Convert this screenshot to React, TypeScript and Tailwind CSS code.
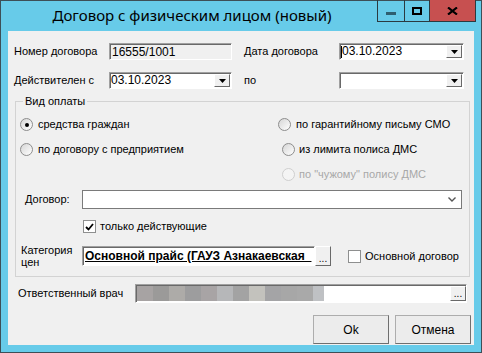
import React from "react";

const sunken =
  "border border-t-[#a0a0a0] border-l-[#a0a0a0] border-b-white border-r-white shadow-[inset_1px_1px_0_#696969]";

function DropBtn() {
  return (
    <div className="w-[16px] h-[13px] bg-[#f0f0f0] border border-t-white border-l-white border-b-[#696969] border-r-[#696969] flex items-center justify-center">
      <svg width="7" height="4" viewBox="0 0 7 4">
        <path d="M0 0H7L3.5 4Z" fill="#000" />
      </svg>
    </div>
  );
}

function DateCombo({ value, caret, w }: { value: string; caret?: boolean; w: string }) {
  return (
    <div className={`h-[17px] ${w} bg-white ${sunken} flex items-center justify-between pl-[1px] pr-[1px]`}>
      <div className="flex items-center text-[12px] leading-[13px] text-black">
        {caret && <span className="w-px h-[12px] bg-black" />}
        <span>{value}</span>
      </div>
      <DropBtn />
    </div>
  );
}

function Radio({ checked, disabled }: { checked?: boolean; disabled?: boolean }) {
  return (
    <span
      className={
        disabled
          ? "w-[13px] h-[13px] rounded-full border border-[#cfcfcf] bg-[#f4f4f4] flex items-center justify-center shrink-0"
          : "w-[13px] h-[13px] rounded-full border border-[#8d8d8d] bg-gradient-to-br from-[#d6d6d6] to-white flex items-center justify-center shrink-0"
      }
    >
      {checked && <span className="w-[4px] h-[4px] rounded-full bg-black" />}
    </span>
  );
}

function Check({ checked }: { checked?: boolean }) {
  return (
    <span className="w-[13px] h-[13px] bg-white border border-[#8e8f8f] flex items-center justify-center shrink-0">
      {checked && (
        <svg width="9" height="8" viewBox="0 0 9 8">
          <path d="M1 4L3.5 6.5L8 1" stroke="#000" strokeWidth="1.8" fill="none" />
        </svg>
      )}
    </span>
  );
}

function DotsBtn({ w }: { w: string }) {
  return (
    <div
      className={`${w} h-full bg-[#f0f0f0] border border-t-white border-l-white border-b-[#696969] border-r-[#696969] flex items-end justify-center pb-[2px] text-[10px] leading-[8px] text-black`}
    >
      ...
    </div>
  );
}

const mosaic = [
  "bg-[#a7a3a3]",
  "bg-[#9b9a99]",
  "bg-[#adaba8]",
  "bg-[#9d9d9e]",
  "bg-[#a8a4a5]",
  "bg-[#b6b7b9]",
  "bg-[#a3a3a3]",
  "bg-[#c3c2bd]",
  "bg-[#a4a4a6]",
  "bg-[#a7a7a7]",
  "bg-[#a9a9a9]",
  "bg-[#bfc1c4]",
];

export default function App() {
  return (
    <div className="w-[482px] h-[353px] bg-[#67cbe9] border border-[#3d4f57] flex flex-col">
      {/* title bar */}
      <div className="h-[30px] flex shrink-0">
        <div className="flex-1 flex items-center justify-center pl-[6px] pb-[1px] text-[15px] text-black font-['Noto_Sans',sans-serif]">
          Договор с физическим лицом (новый)
        </div>
        <div className="flex -mt-px mr-[5px] h-[22px] border-x border-b border-[#2b3a40]">
          <div className="w-[27px] border-r border-[#2b3a40] flex items-start justify-center pt-[12px]">
            <span className="w-[10px] h-[3px] bg-[#2e5f70]" />
          </div>
          <div className="w-[25px] border-r border-[#2b3a40] flex items-start justify-center pt-[7px]">
            <span className="w-[10px] h-[8px] border-2 border-black" />
          </div>
          <div className="w-[45px] bg-[#c75050] flex items-start justify-center pt-[7px]">
            <svg width="11" height="8" viewBox="0 0 11 8">
              <path d="M1 0.5L10 7.5M10 0.5L1 7.5" stroke="#000" strokeWidth="2.2" />
            </svg>
          </div>
        </div>
      </div>

      {/* client */}
      <div className="mx-[7px] h-[314px] bg-[#f0f0f0] flex flex-col font-['Liberation_Sans',Arial,sans-serif] text-[11px] text-black">
        {/* row 1 */}
        <div className="flex items-center mt-[12px] h-[17px] pl-[6px]">
          <div className="w-[95px]">Номер договора</div>
          <div className={`w-[123px] h-[17px] bg-[#f0f0f0] ${sunken} flex items-center pl-[2px] text-[12px]`}>
            16555/1001
          </div>
          <div className="w-[12px]" />
          <div className="w-[95px]">Дата договора</div>
          <DateCombo value="03.10.2023" caret w="w-[125px]" />
        </div>
        {/* row 2 */}
        <div className="flex items-center mt-[12px] h-[17px] pl-[6px]">
          <div className="w-[95px]">Действителен с</div>
          <DateCombo value="03.10.2023" w="w-[123px]" />
          <div className="w-[12px]" />
          <div className="w-[95px]">по</div>
          <DateCombo value="" w="w-[125px]" />
        </div>

        {/* group */}
        <fieldset className="mt-[6px] ml-[7px] w-[455px] border border-[#d3d3d3] pb-[10px] flex flex-col">
          <legend className="ml-[7px] px-[2px] leading-[13px]">Вид оплаты</legend>
          <div className="flex pt-[4px]">
            <div className="w-[262px] pl-[4px] flex flex-col">
              <div className="h-[25px] flex items-center gap-[5px]">
                <Radio checked />
                <span>средства граждан</span>
              </div>
              <div className="h-[25px] flex items-center gap-[5px]">
                <Radio />
                <span>по договору с предприятием</span>
              </div>
              <div className="h-[25px]" />
            </div>
            <div className="flex flex-col">
              <div className="h-[25px] flex items-center gap-[5px]">
                <Radio />
                <span>по гарантийному письму СМО</span>
              </div>
              <div className="h-[25px] flex items-center gap-[4px] pl-[4px]">
                <Radio />
                <span>из лимита полиса ДМС</span>
              </div>
              <div className="h-[25px] flex items-center gap-[4px] pl-[4px] text-[#a8a8a8]">
                <Radio disabled />
                <span>по "чужому" полису ДМС</span>
              </div>
            </div>
          </div>

          <div className="mt-[3px] h-[19px] flex items-center pl-[9px]">
            <div className="w-[57px]">Договор:</div>
            <div className="w-[380px] h-[19px] bg-white border border-[#7a7a7a] flex items-center justify-end pr-[5px]">
              <svg width="8" height="5" viewBox="0 0 8 5">
                <path d="M0.5 0.5L4 4L7.5 0.5" stroke="#555" strokeWidth="1.4" fill="none" />
              </svg>
            </div>
          </div>

          <div className="mt-[11px] h-[13px] flex items-center pl-[67px] gap-[4px]">
            <Check checked />
            <span>только действующие</span>
          </div>

          <div className="mt-[13px] h-[20px] flex items-center pl-[5px]">
            <div className="w-[61px] leading-[12px]">
              Категория
              <br />
              цен
            </div>
            <div className={`w-[233px] h-[20px] bg-white ${sunken} flex items-center pl-[2px] overflow-hidden whitespace-nowrap`}>
              <span className="font-bold underline text-[12px]">Основной прайс (ГАУЗ Азнакаевская&nbsp;&nbsp;</span>
            </div>
            <DotsBtn w="w-[16px]" />
            <div className="w-[17px]" />
            <Check />
            <span className="ml-[4px]">Основной договор</span>
          </div>
        </fieldset>

        {/* doctor */}
        <div className="mt-[7px] h-[19px] flex items-center pl-[10px]">
          <div className="w-[117px]">Ответственный врач</div>
          <div className={`w-[332px] h-[19px] bg-white ${sunken} flex items-stretch pl-[1px] pt-[1px] pb-[1px]`}>
            <div className="flex w-[187px]">
              {mosaic.map((c, i) => (
                <div key={i} className={`${c} ${i === 11 ? "w-[11px]" : "w-[16px]"} h-full`} />
              ))}
            </div>
            <div className="flex-1" />
            <DotsBtn w="w-[16px]" />
          </div>
        </div>

        {/* buttons */}
        <div className="mt-[12px] h-[29px] flex justify-end gap-[6px] pr-[3px] text-[12px]">
          <div className="w-[76px] h-[29px] bg-[#ececec] border border-[#adadad] border-r-[#6f6f6f] border-b-[#6f6f6f] flex items-center justify-center">
            Ok
          </div>
          <div className="w-[76px] h-[29px] bg-[#ececec] border border-[#adadad] border-r-[#6f6f6f] border-b-[#6f6f6f] flex items-center justify-center">
            Отмена
          </div>
        </div>
      </div>
    </div>
  );
}
